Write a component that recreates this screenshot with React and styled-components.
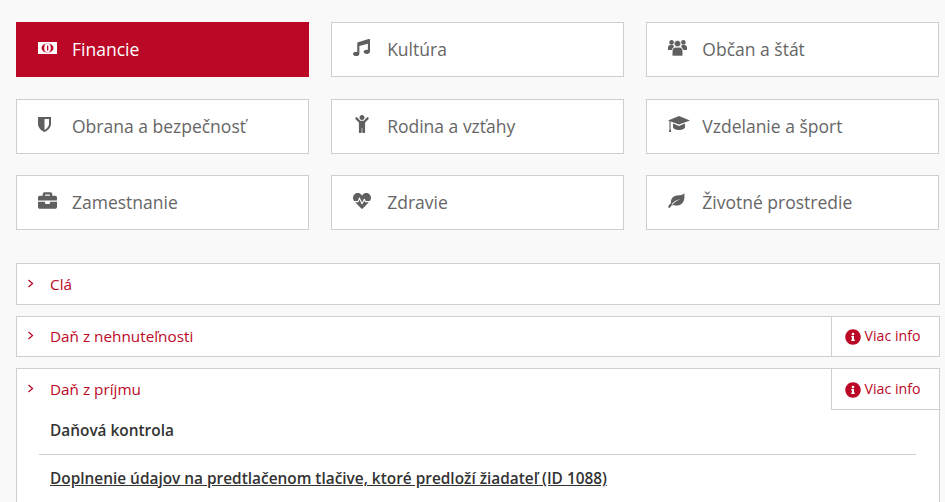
import React from "react";
import styled, { createGlobalStyle } from "styled-components";
import { FaMusic, FaChild, FaBriefcase, FaHeartbeat, FaInfoCircle } from "react-icons/fa";

const Global = createGlobalStyle`
  html, body { margin: 0; padding: 0; height: 502px; overflow: hidden; background: #f9f9f9; }
  * { box-sizing: border-box; }
  body { font-family: "Open Sans", "Liberation Sans", sans-serif; }
`;
const Page = styled.div`
  padding: 22px 5.5px 0 16px;
`;
const Tiles = styled.div`
  display: grid;
  grid-template-columns: repeat(3, 1fr);
  column-gap: 22px;
  row-gap: 21.5px;
  margin-bottom: 33px;
`;
const Tile = styled.a`
  display: flex;
  align-items: center;
  height: 55px;
  padding: 0 0 1px 21px;
  border: 1px solid ${p => (p.$active ? "#bb0826" : "#cfcfcf")};
  background: ${p => (p.$active ? "#bb0826" : "#fff")};
  color: ${p => (p.$active ? "#fff" : "#666")};
  font-size: 17.5px;
  line-height: 24px;
`;
const TileIcon = styled.span`
  flex: 0 0 34px;
  width: 34px;
  height: 20px;
  margin-top: -3px;
  display: flex;
  align-items: center;
  font-size: ${p => p.$size}px;
  color: ${p => (p.$active ? "#fff" : "#5f5f5f")};
`;
const Glyph = styled.svg`
  display: block;
  flex: none;
  fill: currentColor;
`;
const Accordion = styled.div`
  display: flex;
  flex-direction: column;
  gap: 11px;
`;
const Item = styled.section`
  position: relative;
  border: 1px solid #cfcfcf;
  background: #fff;
`;
const Head = styled.div`
  display: flex;
  align-items: center;
  height: 39.5px;
  padding-left: 10px;
  color: #bb0826;
  font-size: 15.3px;
`;
const Chevron = styled.svg`
  flex: 0 0 7px;
  width: 7px;
  height: 9px;
  margin-right: 16px;
  margin-top: -1px;
  fill: none;
  stroke: #bb0826;
  stroke-width: 1.25;
`;
const Info = styled.a`
  position: absolute;
  top: 0;
  right: 0;
  width: 108px;
  height: ${p => (p.$open ? "41px" : "39.5px")};
  display: flex;
  align-items: center;
  padding-left: 13px;
  gap: 4px;
  border-left: 1px solid #cfcfcf;
  border-bottom: ${p => (p.$open ? "1px solid #cfcfcf" : "0")};
  color: #bb0826;
  font-size: 14.2px;
  svg { width: 16px; height: 16px; margin-top: 2px; }
  span { margin-top: -2px; }
`;
const Body = styled.div`
  padding: 12px 23px 40px 22px;
`;
const Title = styled.div`
  padding: 0 0 13.5px 11px;
  border-bottom: 1px solid #cfcfcf;
  color: #333;
  font-size: 15.4px;
  font-weight: 600;
  line-height: 20px;
`;
const DocLink = styled.a`
  display: block;
  margin: 14px 0 0 11px;
  color: #333;
  font-size: 15.4px;
  font-weight: 600;
  line-height: 20px;
  text-decoration: underline;
  white-space: nowrap;
`;

const MoneyIcon = () => (
  <Glyph width="19" height="12" viewBox="0 0 19 12">
    <rect width="19" height="12" fill="#fff" />
    <ellipse cx="9.5" cy="6" rx="6" ry="4.6" fill="#bb0826" />
    <ellipse cx="9.5" cy="6" rx="3.3" ry="4.4" fill="#fff" />
    <rect x="9" y="3.5" width="1.3" height="5" fill="#bb0826" />
  </Glyph>
);
const ShieldIcon = () => (
  <Glyph width="13" height="16" viewBox="0 0 13 16">
    <path fillRule="evenodd" d="M0 1H13V8C13 12 9 15 6.5 16C4 15 0 12 0 8ZM6.5 3V14C8.5 12.8 11 10.5 11 8V3Z" />
  </Glyph>
);
const UsersIcon = () => (
  <Glyph width="19" height="17" viewBox="0 0 19 17">
    <circle cx="3.6" cy="3.4" r="2.3" />
    <circle cx="15.4" cy="3.4" r="2.3" />
    <path d="M0 11V8.5C0 7 1 6 2.5 6H5L6 7.5L3.5 11ZM19 11V8.5C19 7 18 6 16.5 6H14L13 7.5L15.5 11Z" />
    <circle cx="9.5" cy="4.6" r="3.2" stroke="#fff" strokeWidth=".6" />
    <path d="M4.2 17V12C4.2 9.7 6 8.3 7.5 8.3H11.5C13 8.3 14.8 9.7 14.8 12V17Z" stroke="#fff" strokeWidth=".6" />
  </Glyph>
);
const GradIcon = () => (
  <Glyph width="22" height="16" viewBox="0 0 22 16">
    <path d="M11 0L22 4.4L11 8.6L0 4.4Z" />
    <path d="M5 7.6L11 10L17 7.6V11C17 13 14 14 11 14C8 14 5 13 5 11Z" />
    <path d="M1.5 5H2.6V13L3.2 16H.9L1.5 13Z" />
  </Glyph>
);
const LeafIcon = () => (
  <Glyph width="17" height="15" viewBox="0 0 17 15">
    <path fillRule="evenodd" d="M16.5 0C16 2 17 3.5 16 7C15 11 11 13 7.5 12.5C5 12.2 3.5 12 2.5 14L1.5 15C.5 15 0 14 .5 13C1.5 11 3 10 3 10C2.5 6 5 3 9 2.5C12 2.2 15 2 16.5 0ZM3.5 11.2C6 8.2 9 6.6 12.5 6C9 7.6 6.2 9.2 4.4 11.8Z" />
  </Glyph>
);

const tiles = [
  { label: "Financie", icon: <MoneyIcon />, active: true },
  { label: "Kultúra", icon: <FaMusic />, size: 17 },
  { label: "Občan a štát", icon: <UsersIcon /> },
  { label: "Obrana a bezpečnosť", icon: <ShieldIcon /> },
  { label: "Rodina a vzťahy", icon: <FaChild />, size: 18 },
  { label: "Vzdelanie a šport", icon: <GradIcon /> },
  { label: "Zamestnanie", icon: <FaBriefcase />, size: 19 },
  { label: "Zdravie", icon: <FaHeartbeat />, size: 18 },
  { label: "Životné prostredie", icon: <LeafIcon /> },
];

const More = ({ open }) => (
  <Info $open={open}><FaInfoCircle /><span>Viac info</span></Info>
);
const Arrow = () => (
  <Chevron viewBox="0 0 7 9"><polyline points="1.5,1 5.5,4.5 1.5,8" /></Chevron>
);

export default function App() {
  return (
    <Page>
      <Global />
      <Tiles>
        {tiles.map(({ label, icon, active, size }) => (
          <Tile key={label} $active={active}>
            <TileIcon $active={active} $size={size || 18}>{icon}</TileIcon>
            {label}
          </Tile>
        ))}
      </Tiles>
      <Accordion>
        <Item><Head><Arrow />Clá</Head></Item>
        <Item><Head><Arrow />Daň z nehnuteľnosti</Head><More /></Item>
        <Item>
          <Head><Arrow />Daň z príjmu</Head>
          <More open />
          <Body>
            <Title>Daňová kontrola</Title>
            <DocLink>Doplnenie údajov na predtlačenom tlačive, ktoré predloží žiadateľ (ID 1088)</DocLink>
          </Body>
        </Item>
      </Accordion>
    </Page>
  );
}
